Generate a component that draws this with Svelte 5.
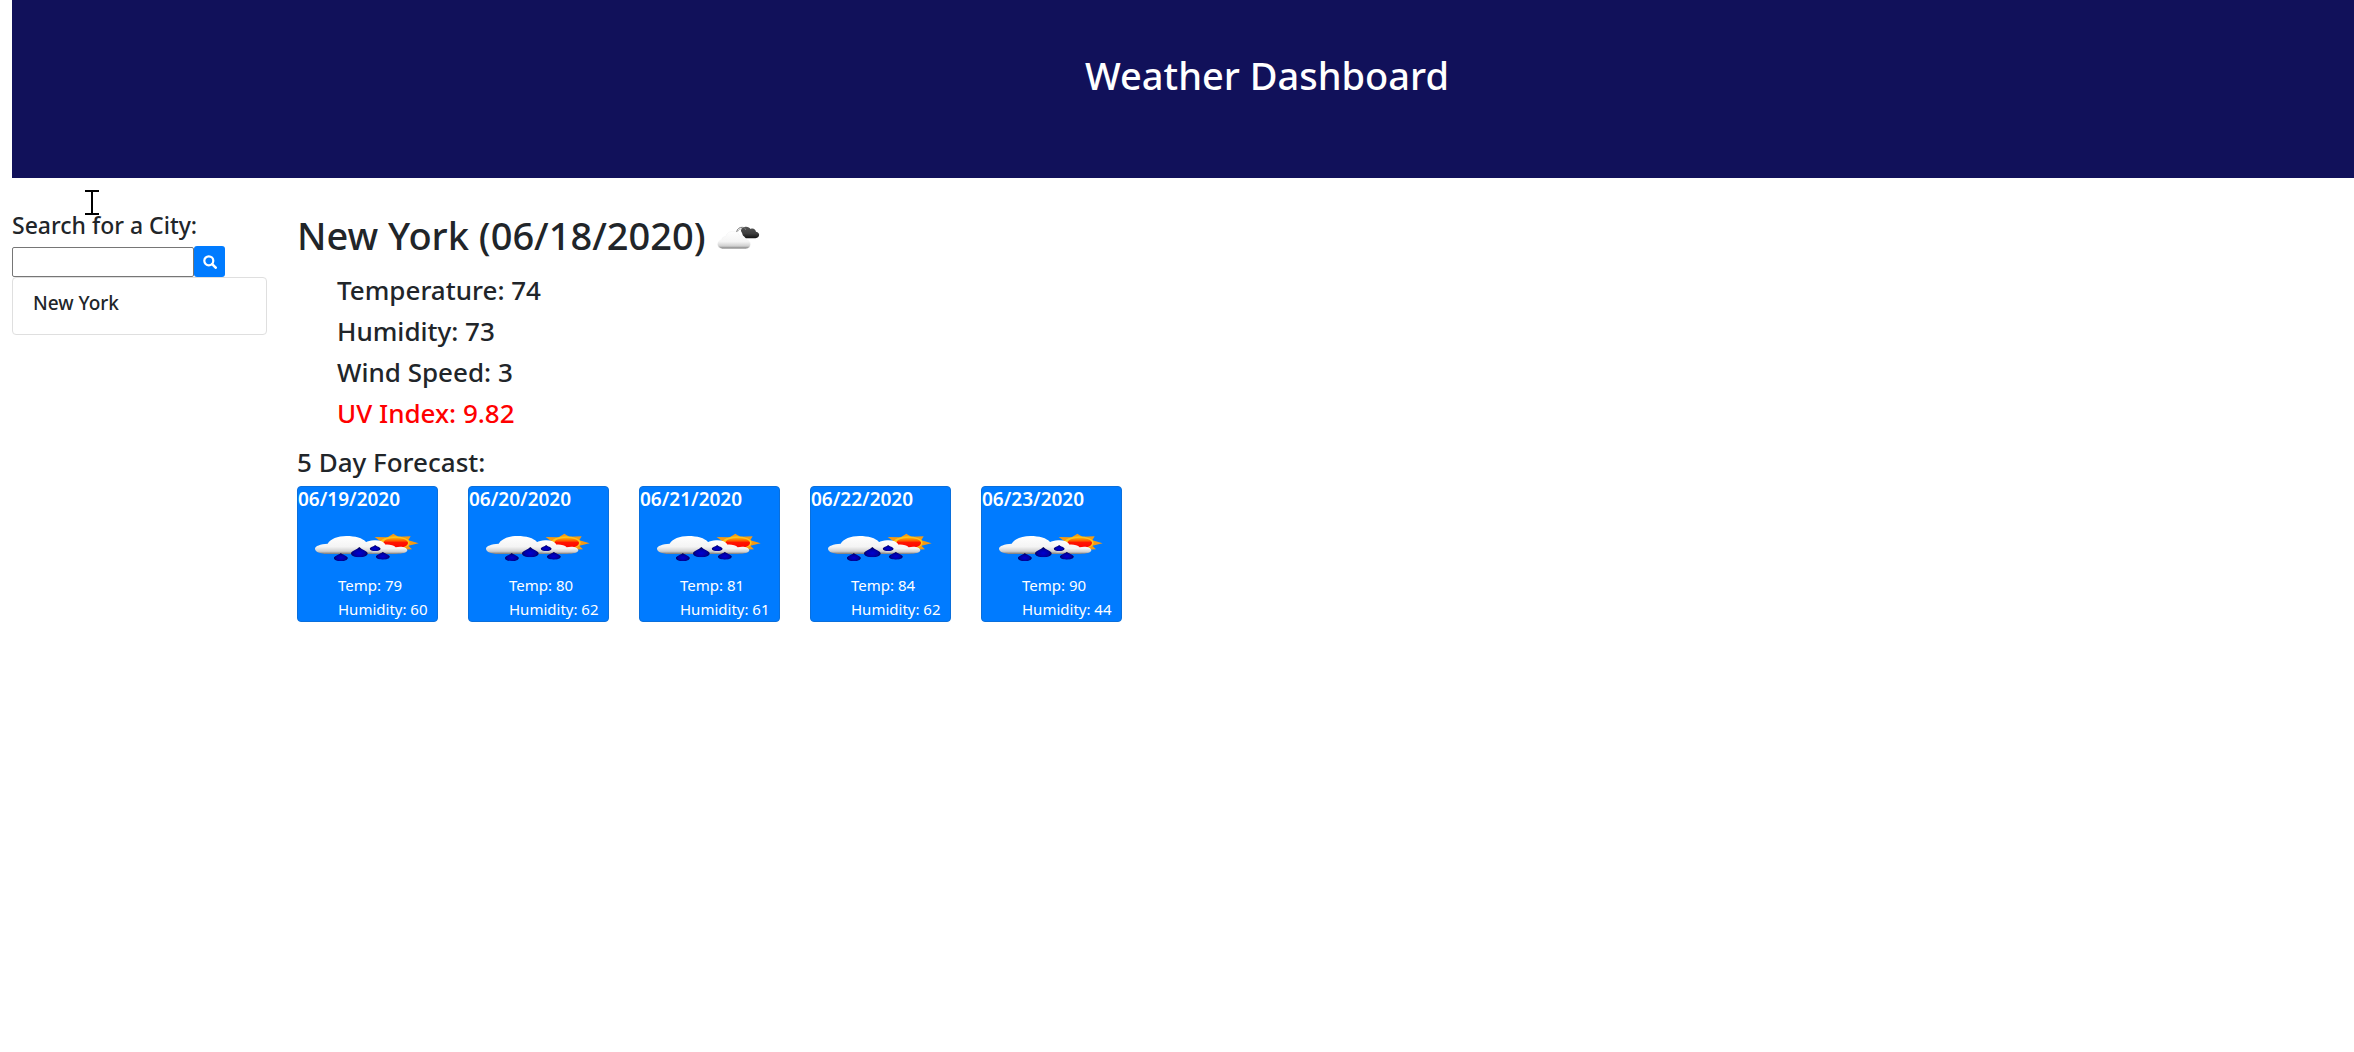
<script>
  let city = $state('');
  const history = ['New York'];
  const current = [
    { label: 'Temperature', value: '74' },
    { label: 'Humidity', value: '73' },
    { label: 'Wind Speed', value: '3' },
    { label: 'UV Index', value: '9.82', severe: true }
  ];
  const forecast = [
    { date: '06/19/2020', temp: 79, humidity: 60 },
    { date: '06/20/2020', temp: 80, humidity: 62 },
    { date: '06/21/2020', temp: 81, humidity: 61 },
    { date: '06/22/2020', temp: 84, humidity: 62 },
    { date: '06/23/2020', temp: 90, humidity: 44 }
  ];
</script>

<svg class="defs" width="0" height="0" aria-hidden="true">
  <defs>
    <linearGradient id="cloudFill" x1="0" y1="0" x2="0" y2="1">
      <stop offset="0" stop-color="#fff" />
      <stop offset="0.6" stop-color="#f4f4f4" />
      <stop offset="0.85" stop-color="#cfcfcf" />
      <stop offset="1" stop-color="#777" />
    </linearGradient>
    <linearGradient id="darkFill" x1="0" y1="0" x2="0" y2="1">
      <stop offset="0" stop-color="#555" />
      <stop offset="0.6" stop-color="#3c3c3c" />
      <stop offset="1" stop-color="#111" />
    </linearGradient>
    <linearGradient id="sunFill" x1="0" y1="0" x2="0" y2="1">
      <stop offset="0" stop-color="#ffb400" />
      <stop offset="0.3" stop-color="#ff5a00" />
      <stop offset="0.45" stop-color="#ff1500" />
      <stop offset="1" stop-color="#ff0000" />
    </linearGradient>
    <radialGradient id="dropFill" cx="0.5" cy="0.6" r="0.55">
      <stop offset="0" stop-color="#0000d0" />
      <stop offset="0.6" stop-color="#0000a4" />
      <stop offset="1" stop-color="#00004c" />
    </radialGradient>
    <symbol id="drop" viewBox="0 0 54 31" preserveAspectRatio="none">
      <path d="M27 0C33 7 52 12 52 19C52 27 40 31 27 31S2 27 2 19C2 12 21 7 27 0Z" fill="url(#dropFill)" />
    </symbol>
  </defs>
</svg>

<header class="banner"><h1>Weather Dashboard</h1></header>

<div class="layout">
  <aside>
    <label class="search-label" for="city">Search for a City:</label>
    <form class="search" onsubmit={(e) => e.preventDefault()}>
      <input id="city" type="text" bind:value={city} />
      <button type="submit" aria-label="Search">
        <svg width="14" height="14" viewBox="0 0 14 14" aria-hidden="true">
          <circle cx="5.8" cy="5.8" r="4.5" fill="none" stroke="#fff" stroke-width="2.2" />
          <path d="M9.2 9.2L12.7 12.7" stroke="#fff" stroke-width="2.6" stroke-linecap="round" />
        </svg>
      </button>
    </form>
    <ul class="history">
      {#each history as name}<li>{name}</li>{/each}
    </ul>
    <svg class="cursor" width="14" height="25" viewBox="0 0 14 25" aria-hidden="true">
      <path d="M0 1H14M0 24H14M7 1V24" stroke="#000" stroke-width="2" fill="none" />
    </svg>
  </aside>

  <main>
    <div class="heading">
      <h2>New York (06/18/2020)</h2>
      <svg width="43" height="23" viewBox="50 34 129 69" role="img" aria-label="Broken clouds">
        <path d="M131 66C126 62 127 56 123 51C120 46 124 38 133 37C141 35 148 39 151 43C158 39 166 44 167 51C174 52 178 57 176 63C174 69 168 71 160 71H141C135 71 132 70 131 66Z" fill="url(#darkFill)" />
        <path d="M109 52C110 43 118 37 126 38C132 38 136 42 136 46" fill="none" stroke="#777" stroke-width="3" />
        <path d="M113 50C115 45 120 42 125 43" fill="none" stroke="#999" stroke-width="2" />
        <path d="M66 102C57 101 52 96 52 89C52 82 57 77 64 75C65 68 71 65 76 66C79 55 88 50 97 50C108 50 116 56 119 65C126 62 135 65 136 74C144 76 150 81 150 89C150 97 145 102 136 102Z" fill="url(#cloudFill)" stroke="#ededed" />
      </svg>
    </div>
    <ul class="current">
      {#each current as item}
        <li class:severe={item.severe}>{item.label}: {item.value}</li>
      {/each}
    </ul>

    <h3>5 Day Forecast:</h3>
    <div class="forecast">
      {#each forecast as day}
        <article class="card">
          <h4>{day.date}</h4>
          <svg viewBox="9 12 417 162" role="img" aria-label="Rain with sun">
            <path d="M295 56L310 65L347 64L340 76L371 85L340 92L351 103L310 105L250 90L258 80L239 66L278 67Z" fill="#f59a13" />
            <ellipse cx="300" cy="83" rx="44" ry="19" fill="#ffc21a" />
            <ellipse cx="302" cy="84" rx="37" ry="16" fill="url(#sunFill)" />
            <path d="M205 117C190 103 195 80 237 76C252 75 266 79 272 89C283 88 297 91 302 97C320 92 337 98 337 106C337 113 322 117 303 117Z" fill="url(#cloudFill)" />
            <path d="M97 117C74 116 60 110 60 101C60 93 76 87 98 86C106 72 128 63 154 63C181 63 203 69 213 81C230 85 240 94 237 105C235 113 224 117 209 117Z" fill="url(#cloudFill)" />
            <use href="#drop" x="115" y="114" width="45" height="24" />
            <use href="#drop" x="166" y="96" width="54" height="31" />
            <use href="#drop" x="223" y="90" width="35" height="18" />
            <use href="#drop" x="241" y="110" width="45" height="24" />
          </svg>
          <p>Temp: {day.temp}</p>
          <p>Humidity: {day.humidity}</p>
        </article>
      {/each}
    </div>
  </main>
</div>

<style>
  :global(body) {
    background: #fff;
    color: #212529;
    font: 15px/24px 'Noto Sans', 'Open Sans', sans-serif;
    overflow-x: hidden;
  }
  h1, h2, h3, h4, p, ul { margin: 0; padding: 0; font-weight: 500; }
  ul { list-style: none; }
  .defs { position: absolute; }
  .banner {
    margin-left: 12px;
    padding: 51px 0 79px 168px;
    background: #11115a;
    color: #fff;
    text-align: center;
  }
  h1, h2 { font-size: 38px; line-height: 48px; }
  .layout { display: flex; gap: 30px; padding: 33px 12px; }
  aside { position: relative; flex: 0 0 255px; }
  .search-label { display: block; font-size: 23px; line-height: 28px; font-weight: 500; padding-bottom: 7px; }
  .search { display: flex; align-items: flex-end; }
  input {
    box-sizing: border-box;
    width: 182px;
    height: 30px;
    padding: 1px 4px;
    border: 1px solid #767676;
    border-radius: 2px;
    font: inherit;
  }
  button {
    display: grid;
    place-items: center;
    width: 31px;
    height: 31px;
    padding: 0;
    border: 0;
    border-radius: 3px;
    background: #007bff;
  }
  .history { border: 1px solid #dfdfdf; border-radius: 4px; padding: 13px 20px 19px; }
  .history li { font-size: 19px; line-height: 24px; }
  .cursor { position: absolute; left: 73px; top: -21px; }
  main { flex: 1; }
  .heading { display: flex; align-items: flex-end; gap: 11px; }
  .heading svg { padding-bottom: 10px; }
  .current { padding: 15px 0 8px 40px; }
  .current li, h3 { font-size: 26px; line-height: 33px; padding-bottom: 8px; }
  h3 { padding-bottom: 7px; }
  .current .severe { color: #f00; }
  .forecast { display: flex; gap: 30px; }
  .card {
    box-sizing: border-box;
    width: 141px;
    border: 1px solid #0a6fdc;
    border-radius: 4px;
    background: #007bff;
    color: #fff;
  }
  .card h4 { font-size: 19px; line-height: 24px; font-weight: 600; padding-bottom: 8px; }
  .card svg { display: block; width: 100%; }
  .card p { padding-left: 40px; font-weight: 400; white-space: nowrap; }
</style>
